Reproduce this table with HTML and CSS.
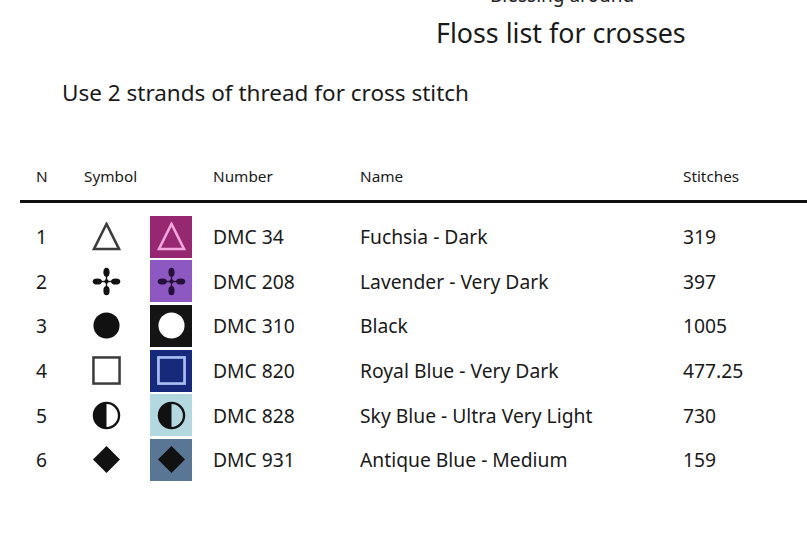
FILE: index.html
```html
<!DOCTYPE html>
<html>
<head>
<meta charset="utf-8">
<link rel="stylesheet" href="styles.css">
</head>
<body>
<div class="page">
  <div class="pretitle">Blessing around</div>
  <h1 class="title">Floss list for crosses</h1>
  <p class="note">Use 2 strands of thread for cross stitch</p>
  <div class="table">
    <div class="row head">
      <div class="c-n">N</div>
      <div class="c-sym">Symbol</div>
      <div class="c-num">Number</div>
      <div class="c-name">Name</div>
      <div class="c-st">Stitches</div>
    </div>
    <div class="rule"></div>

    <div class="row">
      <div class="c-n">1</div>
      <div class="c-sym">
        <svg class="ico" viewBox="0 0 30 30"><polygon points="15,2 28,28 2,28" fill="none" stroke="#3c3c3c" stroke-width="2.6" stroke-linejoin="miter"/></svg>
        <span class="swatch sw1"><svg class="ico" viewBox="0 0 30 30"><polygon points="15,2 28,28 2,28" fill="none" stroke="#f3a6de" stroke-width="2.6"/></svg></span>
      </div>
      <div class="c-num">DMC 34</div>
      <div class="c-name">Fuchsia - Dark</div>
      <div class="c-st">319</div>
    </div>

    <div class="row">
      <div class="c-n">2</div>
      <div class="c-sym">
        <svg class="ico" viewBox="0 0 30 30"><g fill="#111"><line x1="3" y1="15" x2="27" y2="15" stroke="#111" stroke-width="1.4"/><line x1="15" y1="3" x2="15" y2="27" stroke="#111" stroke-width="1.4"/><ellipse cx="15" cy="5.5" rx="3.2" ry="4.8"/><ellipse cx="15" cy="24.5" rx="3.2" ry="4.8"/><ellipse cx="5.5" cy="15" rx="4.8" ry="3.2"/><ellipse cx="24.5" cy="15" rx="4.8" ry="3.2"/><circle cx="15" cy="15" r="2.2"/></g></svg>
        <span class="swatch sw2"><svg class="ico" viewBox="0 0 30 30"><g fill="#24103a"><line x1="3" y1="15" x2="27" y2="15" stroke="#24103a" stroke-width="1.4"/><line x1="15" y1="3" x2="15" y2="27" stroke="#24103a" stroke-width="1.4"/><ellipse cx="15" cy="5.5" rx="3.2" ry="4.8"/><ellipse cx="15" cy="24.5" rx="3.2" ry="4.8"/><ellipse cx="5.5" cy="15" rx="4.8" ry="3.2"/><ellipse cx="24.5" cy="15" rx="4.8" ry="3.2"/><circle cx="15" cy="15" r="2.2"/></g></svg></span>
      </div>
      <div class="c-num">DMC 208</div>
      <div class="c-name">Lavender - Very Dark</div>
      <div class="c-st">397</div>
    </div>

    <div class="row">
      <div class="c-n">3</div>
      <div class="c-sym">
        <svg class="ico" viewBox="0 0 30 30"><circle cx="15" cy="15" r="13.5" fill="#111"/></svg>
        <span class="swatch sw3"><svg class="ico" viewBox="0 0 30 30"><circle cx="15" cy="15" r="13.5" fill="#fff"/></svg></span>
      </div>
      <div class="c-num">DMC 310</div>
      <div class="c-name">Black</div>
      <div class="c-st">1005</div>
    </div>

    <div class="row">
      <div class="c-n">4</div>
      <div class="c-sym">
        <svg class="ico" viewBox="0 0 30 30"><rect x="1.5" y="1.5" width="27" height="27" fill="none" stroke="#3c3c3c" stroke-width="2.6"/></svg>
        <span class="swatch sw4"><svg class="ico" viewBox="0 0 30 30"><rect x="1.5" y="1.5" width="27" height="27" fill="none" stroke="#aabdf0" stroke-width="2.8"/></svg></span>
      </div>
      <div class="c-num">DMC 820</div>
      <div class="c-name">Royal Blue - Very Dark</div>
      <div class="c-st">477.25</div>
    </div>

    <div class="row">
      <div class="c-n">5</div>
      <div class="c-sym">
        <svg class="ico" viewBox="0 0 30 30"><circle cx="15" cy="15" r="13" fill="#fff" stroke="#111" stroke-width="2.4"/><path d="M15 2 A13 13 0 0 0 15 28 Z" fill="#111"/></svg>
        <span class="swatch sw5"><svg class="ico" viewBox="0 0 30 30"><circle cx="15" cy="15" r="13" fill="#b4d8e0" stroke="#111" stroke-width="2.4"/><path d="M15 2 A13 13 0 0 0 15 28 Z" fill="#111"/></svg></span>
      </div>
      <div class="c-num">DMC 828</div>
      <div class="c-name">Sky Blue - Ultra Very Light</div>
      <div class="c-st">730</div>
    </div>

    <div class="row">
      <div class="c-n">6</div>
      <div class="c-sym">
        <svg class="ico" viewBox="0 0 30 30"><polygon points="15,1 29,15 15,29 1,15" fill="#111"/></svg>
        <span class="swatch sw6"><svg class="ico" viewBox="0 0 30 30"><polygon points="15,1 29,15 15,29 1,15" fill="#111"/></svg></span>
      </div>
      <div class="c-num">DMC 931</div>
      <div class="c-name">Antique Blue - Medium</div>
      <div class="c-st">159</div>
    </div>
  </div>
</div>
</body>
</html>
```

FILE: styles.css
```css
html, body {
  margin: 0;
  padding: 0;
  background: #fff;
}
body {
  font-family: "Noto Sans", "Open Sans", sans-serif;
  color: #1a1a1a;
  overflow: hidden;
  height: 554px;
}
.page {
  display: flex;
  flex-direction: column;
}
.pretitle {
  margin-top: -15px;
  padding-left: 490px;
  font-size: 19px;
  line-height: 20px;
  height: 20px;
  color: #222;
}
.title {
  margin: 0;
  padding-left: 436px;
  font-size: 26.8px;
  font-weight: 400;
  line-height: 34px;
  margin-top: 11px;
}
.note {
  margin: 0;
  margin-top: 30px;
  padding-left: 62px;
  font-size: 22.5px;
  line-height: 26px;
}
.table {
  margin-top: 52px;
  padding-left: 20px;
  display: flex;
  flex-direction: column;
}
.row {
  display: grid;
  grid-template-columns: 64px 129px 147px 323px 1fr;
  align-items: center;
  height: 44.6px;
  font-size: 19.3px;
}
.row > div:first-child {
  padding-left: 16px;
}
.row.head {
  font-size: 15.3px;
  height: 36px;
}
.rule {
  height: 2.5px;
  background: #111;
  margin-top: 6px;
  margin-bottom: 12px;
}
.c-sym {
  display: flex;
  align-items: center;
}
.head .c-sym {
  display: block;
}
.ico {
  width: 29px;
  height: 29px;
  display: block;
}
.c-sym > .ico {
  margin-left: 8px;
}
.swatch {
  width: 42px;
  height: 42px;
  margin-left: 29px;
  display: flex;
  align-items: center;
  justify-content: center;
}
.sw1 { background: #952870; }
.sw2 { background: #8d58c2; }
.sw3 { background: #141414; }
.sw4 { background: #17297b; }
.sw5 { background: #b4d8e0; }
.sw6 { background: #5a7695; }
```
